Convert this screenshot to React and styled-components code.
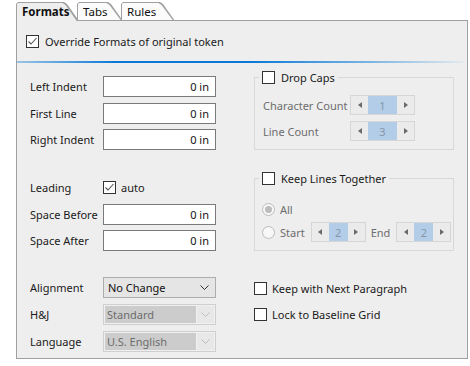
import React from "react";
import styled, { createGlobalStyle } from "styled-components";

const Global = createGlobalStyle`
  html, body { margin: 0; padding: 0; background: #ffffff; }
  body { font-family: "Noto Sans", "Open Sans", sans-serif; font-size: 11px; color: #1a1a1a; }
  * { box-sizing: border-box; }
`;

const Page = styled.div`
  padding: 2px 0 0 16px;
`;

const TabRow = styled.div`
  display: flex;
  position: relative;
  z-index: 1;
  margin-bottom: -1px;
  height: 19px;
`;

const Tab = styled.div`
  width: ${(p) => p.$w}px;
  height: 19px;
  margin-right: -2px;
  padding: 1px 1px 0 1px;
  background: #a0a0a0;
  position: relative;
  z-index: ${(p) => (p.$active ? 3 : 1)};
  clip-path: polygon(0 100%, 0 2px, 2px 0, calc(100% - 15px) 0, calc(100% - 12px) 2px, 100% 100%);
`;

const TabFace = styled.div`
  height: ${(p) => (p.$active ? 18 : 17)}px;
  background: ${(p) => (p.$active ? "#eeeeee" : "#fbfbfb")};
  clip-path: polygon(0 100%, 0 1px, 1px 0, calc(100% - 15.5px) 0, calc(100% - 12.5px) 2px, calc(100% - 1.3px) 100%);
  padding-left: 5px;
  line-height: 18px;
  font-size: 11.5px;
  font-weight: ${(p) => (p.$active ? 700 : 400)};
  color: #111;
`;

const Panel = styled.div`
  width: 452px;
  height: 339px;
  border: 1px solid #a0a0a0;
  background: #eeeeee;
  display: flex;
  flex-direction: column;
`;

const Header = styled.div`
  padding: 14px 0 0 9px;
`;

const Divider = styled.div`
  margin: 13px 3px 0 0;
  height: 2px;
  background: linear-gradient(
    to right,
    rgba(0, 120, 215, 0.35) 0%,
    #0a78d7 22%,
    #0a78d7 52%,
    rgba(0, 120, 215, 0.5) 78%,
    rgba(0, 120, 215, 0.04) 100%
  );
`;

const Body = styled.div`
  display: grid;
  grid-template-columns: 237px 1fr;
`;

const Column = styled.div`
  display: flex;
  flex-direction: column;
  padding: ${(p) => p.$pad};
`;

const Section = styled.div`
  display: flex;
  flex-direction: column;
  gap: ${(p) => p.$gap}px;
  margin-top: ${(p) => p.$mt || 0}px;
`;

const Row = styled.div`
  display: flex;
  align-items: center;
  height: ${(p) => p.$h || 21}px;
`;

const Label = styled.span`
  width: ${(p) => p.$w || 73}px;
  flex: none;
  color: ${(p) => (p.$disabled ? "#6d6d6d" : "#1a1a1a")};
  white-space: nowrap;
`;

const TextInput = styled.div`
  width: 113px;
  height: 21px;
  border: 1px solid #7a7a7a;
  background: #ffffff;
  display: flex;
  align-items: center;
  justify-content: flex-end;
  padding-right: 6px;
  color: #111;
`;

const Box = styled.span`
  width: 13px;
  height: 13px;
  flex: none;
  border: 1px solid #333333;
  background: #ffffff;
  display: inline-flex;
  align-items: center;
  justify-content: center;
`;

const CheckLine = styled.label`
  display: flex;
  align-items: center;
  gap: ${(p) => p.$gap || 6}px;
  height: 13px;
  white-space: nowrap;
  color: #1a1a1a;
`;

const Check = ({ checked }) => (
  <Box>
    {checked && (
      <svg width="11" height="11" viewBox="0 0 11 11">
        <polyline points="1.5,5.5 4,8 9.5,2" fill="none" stroke="#555" strokeWidth="1.1" />
      </svg>
    )}
  </Box>
);

const Radio = styled.span`
  width: 13px;
  height: 13px;
  flex: none;
  border-radius: 50%;
  border: 1px solid #bcbcbc;
  background: #f7f7f7;
  display: inline-flex;
  align-items: center;
  justify-content: center;
  margin-left: -1px;
  &::after {
    content: "";
    display: ${(p) => (p.$on ? "block" : "none")};
    width: 7px;
    height: 7px;
    border-radius: 50%;
    background: #bcbcbc;
  }
`;

const Group = styled.fieldset`
  margin: ${(p) => p.$mt || 0}px 0 0 0;
  width: 200px;
  border: 1px solid #d8d8d8;
  padding: ${(p) => p.$pt}px 8px 8px 8px;
  min-width: 0;
  display: flex;
  flex-direction: column;
  gap: ${(p) => p.$gap}px;
`;

const Legend = styled.legend`
  padding: 0 3px;
  margin-left: -4px;
  height: 13px;
  display: flex;
  align-items: center;
`;

const Spinner = styled.div`
  display: flex;
  height: 20px;
  border: 1px solid #d6d6d6;
  background: #ebebeb;
  flex: none;
`;

const SpinBtn = styled.span`
  width: ${(p) => p.$w}px;
  display: flex;
  align-items: center;
  justify-content: center;
`;

const SpinField = styled.span`
  width: ${(p) => p.$w}px;
  background: #b3cde9;
  color: #8895a6;
  display: flex;
  align-items: center;
  justify-content: center;
`;

const Tri = ({ dir }) => (
  <svg width="4" height="6" viewBox="0 0 4 6">
    {dir === "left" ? (
      <polygon points="4,0 4,6 0,3" fill="#6a6a6a" />
    ) : (
      <polygon points="0,0 0,6 4,3" fill="#6a6a6a" />
    )}
  </svg>
);

const Spin = ({ value, field }) => (
  <Spinner>
    <SpinBtn $w={17}>
      <Tri dir="left" />
    </SpinBtn>
    <SpinField $w={field}>{value}</SpinField>
    <SpinBtn $w={17}>
      <Tri dir="right" />
    </SpinBtn>
  </Spinner>
);

const DimText = styled.span`
  color: #6d6d6d;
  margin: ${(p) => p.$m || "0"};
  white-space: nowrap;
`;

const Chevron = ({ color }) => (
  <svg width="9" height="5" viewBox="0 0 9 5">
    <polyline points="0.5,0.5 4.5,4.5 8.5,0.5" fill="none" stroke={color} strokeWidth="1" />
  </svg>
);

const Select = styled.div`
  width: 113px;
  height: 21px;
  border: 1px solid #adadad;
  background: #e5e5e5;
  display: flex;
  align-items: center;
  justify-content: space-between;
  padding: 0 6px 0 4px;
  color: #111;
`;

const DisabledSelect = styled.div`
  width: 113px;
  height: 21px;
  border: 1px solid #cfcfcf;
  background: #f0f0f0;
  display: flex;
  padding: 1px;
`;

const DisabledValue = styled.span`
  flex: 1;
  background: #cccccc;
  color: #6d6d6d;
  display: flex;
  align-items: center;
  padding-left: 2px;
  margin-right: 1px;
`;

const DisabledArrow = styled.span`
  width: 17px;
  display: flex;
  align-items: center;
  justify-content: center;
  background: #e8e8e8;
`;

const InputRow = ({ label, value }) => (
  <Row>
    <Label>{label}</Label>
    <TextInput>{value}</TextInput>
  </Row>
);

export default function App() {
  return (
    <Page>
      <Global />
      <TabRow>
        <Tab $w={63} $active>
          <TabFace $active>Formats</TabFace>
        </Tab>
        <Tab $w={46}>
          <TabFace>Tabs</TabFace>
        </Tab>
        <Tab $w={54}>
          <TabFace>Rules</TabFace>
        </Tab>
      </TabRow>
      <Panel>
        <Header>
          <CheckLine>
            <Check checked />
            Override Formats of original token
          </CheckLine>
        </Header>
        <Divider />
        <Body>
          <Column $pad="13px 0 0 13px">
            <Section $gap={5.5}>
              <InputRow label="Left Indent" value="0 in" />
              <InputRow label="First Line" value="0 in" />
              <InputRow label="Right Indent" value="0 in" />
            </Section>
            <Section $gap={5.5} $mt={27}>
              <Row>
                <Label>Leading</Label>
                <CheckLine $gap={5}>
                  <Check checked />
                  auto
                </CheckLine>
              </Row>
              <InputRow label="Space Before" value="0 in" />
              <InputRow label="Space After" value="0 in" />
            </Section>
            <Section $gap={6} $mt={26}>
              <Row>
                <Label>Alignment</Label>
                <Select>
                  No Change
                  <Chevron color="#333" />
                </Select>
              </Row>
              <Row>
                <Label>H&amp;J</Label>
                <DisabledSelect>
                  <DisabledValue>Standard</DisabledValue>
                  <DisabledArrow>
                    <Chevron color="#bdbdbd" />
                  </DisabledArrow>
                </DisabledSelect>
              </Row>
              <Row>
                <Label>Language</Label>
                <DisabledSelect>
                  <DisabledValue>U.S. English</DisabledValue>
                  <DisabledArrow>
                    <Chevron color="#bdbdbd" />
                  </DisabledArrow>
                </DisabledSelect>
              </Row>
            </Section>
          </Column>
          <Column $pad="8px 0 0 0">
            <Group $pt={11} $gap={6}>
              <Legend>
                <CheckLine>
                  <Check />
                  Drop Caps
                </CheckLine>
              </Legend>
              <Row $h={20}>
                <Label $w={87} $disabled>Character Count</Label>
                <Spin value="1" field={29} />
              </Row>
              <Row $h={20}>
                <Label $w={87} $disabled>Line Count</Label>
                <Spin value="3" field={29} />
              </Row>
            </Group>
            <Group $mt={22} $pt={14} $gap={3}>
              <Legend>
                <CheckLine>
                  <Check />
                  Keep Lines Together
                </CheckLine>
              </Legend>
              <Row $h={20}>
                <Radio $on />
                <DimText $m="0 0 0 5px">All</DimText>
              </Row>
              <Row $h={20}>
                <Radio />
                <DimText $m="0 6px 0 5px">Start</DimText>
                <Spin value="2" field={19} />
                <DimText $m="0 6px 0 5px">End</DimText>
                <Spin value="2" field={19} />
              </Row>
            </Group>
            <Section $gap={13} $mt={31}>
              <CheckLine $gap={5}>
                <Check />
                Keep with Next Paragraph
              </CheckLine>
              <CheckLine $gap={5}>
                <Check />
                Lock to Baseline Grid
              </CheckLine>
            </Section>
          </Column>
        </Body>
      </Panel>
    </Page>
  );
}
